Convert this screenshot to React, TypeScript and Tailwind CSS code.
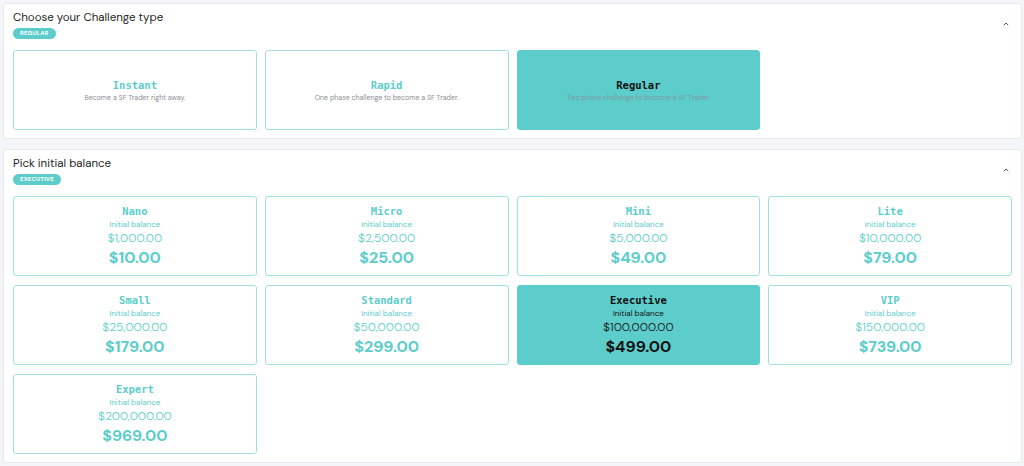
import { ChevronUp } from 'lucide-react'

const types = [
  { name: 'Instant', desc: 'Become a SF Trader right away.' },
  { name: 'Rapid', desc: 'One phase challenge to become a SF Trader.' },
  { name: 'Regular', desc: 'Two phase challenge to become a SF Trader.' },
]

const balances = [
  { name: 'Nano', balance: '$1,000.00', price: '$10.00' },
  { name: 'Micro', balance: '$2,500.00', price: '$25.00' },
  { name: 'Mini', balance: '$5,000.00', price: '$49.00' },
  { name: 'Lite', balance: '$10,000.00', price: '$79.00' },
  { name: 'Small', balance: '$25,000.00', price: '$179.00' },
  { name: 'Standard', balance: '$50,000.00', price: '$299.00' },
  { name: 'Executive', balance: '$100,000.00', price: '$499.00' },
  { name: 'VIP', balance: '$150,000.00', price: '$739.00' },
  { name: 'Expert', balance: '$200,000.00', price: '$969.00' },
]

const mono = { fontFamily: '"DejaVu Sans Mono", "Liberation Mono", monospace' }

function Section({ title, badge, children }: { title: string; badge: string; children: React.ReactNode }) {
  return (
    <section className="rounded-[3px] border border-[#e7e9ef] bg-white px-[9px] pt-[6px] pb-[8px]">
      <div className="flex items-start justify-between">
        <div className="flex flex-col items-start">
          <h2 className="text-[11.5px] leading-[16px] text-[#1d1f24]">{title}</h2>
          <span className="mt-[2px] block rounded-full bg-[#5ccdcb] px-[7px] text-[6px] font-bold leading-[11px] tracking-wide text-white">
            {badge}
          </span>
        </div>
        <ChevronUp className="mt-[10px] mr-[2px] h-[8px] w-[8px] text-[#555]" strokeWidth={3} />
      </div>
      <div className="mt-[11px] grid grid-cols-4 gap-x-[8px] gap-y-[9px]">{children}</div>
    </section>
  )
}

export default function App() {
  return (
    <div
      className="flex min-h-[466px] flex-col gap-[10px] bg-[#f4f5f9] p-[3px] pr-[2px]"
      style={{ fontFamily: '"DM Sans", Inter, "Noto Sans", sans-serif' }}
    >
      <Section title="Choose your Challenge type" badge="REGULAR">
        {types.map((t) => {
          const active = t.name === 'Regular'
          return (
            <button
              key={t.name}
              type="button"
              className={`flex h-[80px] flex-col items-center justify-center rounded-[3px] border ${
                active ? 'border-[#5ccdcb] bg-[#5ccdcb]' : 'border-[#9fe1e0] bg-white'
              }`}
            >
              <span
                className={`text-[10.5px] font-bold leading-[14px] ${active ? 'text-[#111]' : 'text-[#5ccdcb]'}`}
                style={mono}
              >
                {t.name}
              </span>
              <span className={`text-[7px] leading-[11px] ${active ? 'text-[#7e9aa0]' : 'text-[#8a8d96]'}`}>
                {t.desc}
              </span>
            </button>
          )
        })}
      </Section>
      <Section title="Pick initial balance" badge="EXECUTIVE">
        {balances.map((b) => {
          const active = b.name === 'Executive'
          const tone = active ? 'text-[#111]' : 'text-[#5ccdcb]'
          return (
            <button
              key={b.name}
              type="button"
              className={`flex h-[80px] flex-col items-center justify-center rounded-[3px] border ${
                active ? 'border-[#5ccdcb] bg-[#5ccdcb]' : 'border-[#9fe1e0] bg-white'
              }`}
            >
              <span className={`text-[10.5px] font-bold leading-[14px] ${tone}`} style={mono}>
                {b.name}
              </span>
              <span className={`text-[8px] leading-[12px] ${tone}`}>Initial balance</span>
              <span className={`text-[12px] font-light leading-[17px] ${tone}`}>{b.balance}</span>
              <span className={`text-[16px] font-bold leading-[21px] ${tone}`}>{b.price}</span>
            </button>
          )
        })}
      </Section>
    </div>
  )
}
